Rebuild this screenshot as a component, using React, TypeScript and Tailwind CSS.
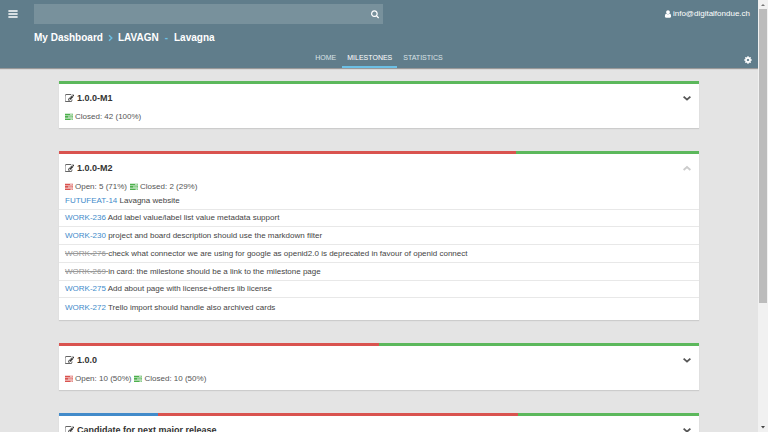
import React from "react";

type Tone = "blue" | "red" | "green";
type Card = { id: string; title: string; done?: boolean };
type Milestone = {
  name: string;
  segments: { tone: Tone; share: number }[];
  stats: { tone: Tone; text: string }[];
  expanded?: boolean;
  cards?: Card[];
};

const barTone: Record<Tone, string> = {
  blue: "bg-[#428bca]",
  red: "bg-[#d9534f]",
  green: "bg-[#5cb85c]",
};

const iconTone: Record<Tone, string> = {
  blue: "text-[#428bca]",
  red: "text-[#d9534f]",
  green: "text-[#4cb04c]",
};

const milestones: Milestone[] = [
  {
    name: "1.0.0-M1",
    segments: [{ tone: "green", share: 100 }],
    stats: [{ tone: "green", text: "Closed: 42 (100%)" }],
  },
  {
    name: "1.0.0-M2",
    segments: [
      { tone: "red", share: 71.4 },
      { tone: "green", share: 28.6 },
    ],
    stats: [
      { tone: "red", text: "Open: 5 (71%)" },
      { tone: "green", text: "Closed: 2 (29%)" },
    ],
    expanded: true,
    cards: [
      { id: "FUTUFEAT-14", title: "Lavagna website" },
      { id: "WORK-236", title: "Add label value/label list value metadata support" },
      { id: "WORK-230", title: "project and board description should use the markdown filter" },
      {
        id: "WORK-276",
        title: "check what connector we are using for google as openid2.0 is deprecated in favour of openid connect",
        done: true,
      },
      { id: "WORK-269", title: "in card: the milestone should be a link to the milestone page", done: true },
      { id: "WORK-275", title: "Add about page with license+others lib license" },
      { id: "WORK-272", title: "Trello import should handle also archived cards" },
    ],
  },
  {
    name: "1.0.0",
    segments: [
      { tone: "red", share: 50 },
      { tone: "green", share: 50 },
    ],
    stats: [
      { tone: "red", text: "Open: 10 (50%)" },
      { tone: "green", text: "Closed: 10 (50%)" },
    ],
  },
  {
    name: "Candidate for next major release",
    segments: [
      { tone: "blue", share: 15.4 },
      { tone: "red", share: 56.3 },
      { tone: "green", share: 28.3 },
    ],
    stats: [],
  },
];

function Icon({ d, className }: { d: string; className: string }) {
  return (
    <svg viewBox="64 64 1664 1664" fill="currentColor" aria-hidden="true" className={`shrink-0 ${className}`}>
      <path d={d} />
    </svg>
  );
}

const EDIT =
  "M888 1184l116-116-152-152-116 116v56h96v96h56zm440-720q-16-16-33 1l-350 350q-17 17-1 33t33-1l350-350q17-17 1-33zm80 594v190q0 119-84.5 203.5t-203.5 84.5h-832q-119 0-203.5-84.5t-84.5-203.5v-832q0-119 84.5-203.5t203.5-84.5h832q63 0 117 25 15 7 18 23 3 17-9 29l-49 49q-14 14-32 8-23-6-45-6h-832q-66 0-113 47t-47 113v832q0 66 47 113t113 47h832q66 0 113-47t47-113v-126q0-13 9-22l64-64q15-15 35-7t20 29zm-96-738l288 288-672 672h-288v-288zm444 132l-92 92-288-288 92-92q28-28 68-28t68 28l152 152q28 28 28 68t-28 68z";
const USER =
  "M1536 1399q0 109-62.5 187t-150.5 78h-854q-88 0-150.5-78t-62.5-187q0-85 8.5-160.5t31.5-152 58.5-131 94-89 134.5-34.5q131 128 313 128t313-128q76 0 134.5 34.5t94 89 58.5 131 31.5 152 8.5 160.5zm-256-887q0 159-112.5 271.5t-271.5 112.5-271.5-112.5-112.5-271.5 112.5-271.5 271.5-112.5 271.5 112.5 112.5 271.5z";
const COG =
  "M1152 896q0-106-75-181t-181-75-181 75-75 181 75 181 181 75 181-75 75-181zm512-109v222q0 12-8 23t-20 13l-185 28q-19 54-39 91 35 50 107 138 10 12 10 25t-9 23q-27 37-99 108t-94 71q-12 0-26-9l-138-108q-44 23-91 38-16 136-29 186-7 28-36 28h-222q-14 0-24.5-8.5t-11.5-21.5l-28-184q-49-16-90-37l-141 107q-10 9-25 9-14 0-25-11-126-114-165-168-7-10-7-23 0-12 8-23 15-21 51-66.5t54-70.5q-27-50-41-99l-183-27q-13-2-21-12.5t-8-23.5v-222q0-12 8-23t19-13l186-28q14-46 39-92-40-57-107-138-10-12-10-24 0-10 9-23 26-36 98.5-107.5t94.5-71.5q13 0 26 10l138 107q44-23 91-38 16-136 29-186 7-28 36-28h222q14 0 24.5 8.5t11.5 21.5l28 184q49 16 90 37l142-107q9-9 24-9 13 0 25 10 129 119 165 170 7 8 7 22 0 12-8 23-15 21-51 66.5t-54 70.5q26 50 41 98l183 28q13 2 21 12.5t8 23.5z";
const SEARCH =
  "M1216 832q0-185-131.5-316.5t-316.5-131.5-316.5 131.5-131.5 316.5 131.5 316.5 316.5 131.5 316.5-131.5 131.5-316.5zm512 832q0 52-38 90t-90 38q-54 0-90-38l-343-342q-179 124-399 124-143 0-273.5-55.5t-225-150-150-225-55.5-273.5 55.5-273.5 150-225 225-150 273.5-55.5 273.5 55.5 225 150 150 225 55.5 273.5q0 220-124 399l343 343q37 37 37 90z";
const BARS = "M128 256h1536v256h-1536zM128 768h1536v256h-1536zM128 1280h1536v256h-1536z";

function TasksIcon({ tone }: { tone: Tone }) {
  return (
    <svg viewBox="0 0 8 8" fill="currentColor" aria-hidden="true" className={`size-2 shrink-0 ${iconTone[tone]}`}>
      <path d="M0 0.8h8v1.7h-8zM0 3.1h8v1.7h-8zM0 5.4h8v1.7h-8z" />
      <path d="M5 1.2h2.6v0.9h-2.6zM3 3.5h4.6v0.9h-4.6zM5.5 5.8h2.1v0.9h-2.1z" fill="#fff" fillOpacity="0.8" />
    </svg>
  );
}

function Chevron({ up }: { up?: boolean }) {
  return (
    <svg viewBox="0 0 8 8" fill="none" stroke="currentColor" strokeWidth="1.9" aria-hidden="true" className="size-2">
      <path d={up ? "M0.6 6L4 3L7.4 6" : "M0.6 2.6L4 5.6L7.4 2.6"} />
    </svg>
  );
}

function MilestonePanel({ milestone }: { milestone: Milestone }) {
  const { name, segments, stats, expanded, cards } = milestone;
  return (
    <section className="bg-white shadow-[0_1px_1px_#cccccc]">
      <div className="flex h-[3px]">
        {segments.map((s) => (
          <div key={s.tone} className={barTone[s.tone]} style={{ width: `${s.share}%` }} />
        ))}
      </div>
      <div className="flex items-center gap-[3px] px-1.5 pt-2">
        <button type="button" aria-label={`Edit ${name}`} className="text-[#333333]">
          <Icon d={EDIT} className="size-[9px]" />
        </button>
        <h2 className="text-[9px] leading-3 font-bold text-[#333333]">{name}</h2>
        <button
          type="button"
          aria-label={expanded ? "Collapse" : "Expand"}
          className={`ml-auto mr-0.5 ${expanded ? "text-[#cccccc]" : "text-[#555555]"}`}
        >
          <Chevron up={expanded} />
        </button>
      </div>
      <div className={`mt-2 flex gap-[3px] px-1.5 leading-[10px] text-[#555555] ${cards ? "" : "pb-1.5"}`}>
        {stats.map((s) => (
          <span key={s.tone} className="flex items-center gap-0.5">
            <TasksIcon tone={s.tone} />
            {s.text}
          </span>
        ))}
      </div>
      {cards && (
        <ul className="mb-1 grid min-h-[124px] auto-rows-fr divide-y divide-[#e8e8e8]">
          {cards.map((c) => (
            <li key={c.id} className="flex items-end px-1.5 pb-0.5">
              <p>
                <a href="#" className={c.done ? "text-[#999999] line-through" : "text-[#428bca]"}>
                  {c.id}{" "}
                </a>
                {c.title}
              </p>
            </li>
          ))}
        </ul>
      )}
    </section>
  );
}

function Tab({ label, active }: { label: string; active?: boolean }) {
  return (
    <a
      href="#"
      aria-current={active ? "page" : undefined}
      className={`border-b-2 px-[5px] pb-[3px] ${
        active ? "border-[#6cc0e5] text-white" : "border-transparent text-[#dbe3e7]"
      }`}
    >
      {label}
    </a>
  );
}

export default function App() {
  return (
    <div className="flex h-screen overflow-hidden bg-[#e4e4e4] font-['Liberation_Sans',Arial,sans-serif] text-[8px] leading-3 text-[#444444]">
      <div className="flex min-w-0 flex-1 flex-col">
        <header className="flex shrink-0 flex-col bg-[#607d8b] text-white shadow-[0_1px_1px_#999999]">
          <div className="flex items-center pt-1 pr-2 pl-2">
            <button type="button" aria-label="Menu" className="mr-4">
              <Icon d={BARS} className="size-2.5" />
            </button>
            <form className="flex h-5 w-[47%] items-center bg-[#78919c] pr-1" role="search">
              <input
                type="text"
                aria-label="Search"
                className="h-full min-w-0 flex-1 bg-transparent px-2 outline-none"
              />
              <button type="submit" aria-label="Search">
                <Icon d={SEARCH} className="size-2 overflow-visible" />
              </button>
            </form>
            <a href="#" className="ml-auto flex items-center gap-px">
              <Icon d={USER} className="size-2" />
              info@digitalfondue.ch
            </a>
          </div>
          <nav aria-label="Breadcrumb" className="mt-2 flex items-center pl-[34px] text-[10px] leading-3 font-bold">
            <a href="#">My Dashboard</a>
            <svg
              viewBox="0 0 5 8"
              fill="none"
              stroke="#6cc0e5"
              strokeWidth="1.4"
              aria-hidden="true"
              className="mx-[5px] h-2 w-[5px]"
            >
              <path d="M1 1.2L3.8 4L1 6.8" />
            </svg>
            <a href="#">LAVAGN</a>
            <span className="mx-1.5 text-[#6cc0e5]">-</span>
            <a href="#">Lavagna</a>
          </nav>
          <div className="mt-2 grid grid-cols-[1fr_auto_1fr] items-center">
            <nav aria-label="Project" className="col-start-2 flex gap-px text-[7px] leading-[11px]">
              <Tab label="HOME" />
              <Tab label="MILESTONES" active />
              <Tab label="STATISTICS" />
            </nav>
            <button type="button" aria-label="Settings" className="mr-1.5 justify-self-end">
              <Icon d={COG} className="size-2" />
            </button>
          </div>
        </header>
        <main className="mx-auto mt-[13px] flex w-full max-w-[640px] flex-col gap-[23px]">
          {milestones.map((m) => (
            <MilestonePanel key={m.name} milestone={m} />
          ))}
        </main>
      </div>
      <div aria-hidden="true" className="flex w-2.5 shrink-0 flex-col items-center bg-[#f1f1f1]">
        <svg viewBox="0 0 10 9" className="h-[9px] w-2.5 shrink-0" fill="#777777">
          <path d="M3 6h4L5 4z" />
        </svg>
        <div className="h-[68%] w-2 bg-[#bcbcbc]" />
        <svg viewBox="0 0 10 9" className="mt-auto h-[9px] w-2.5 shrink-0" fill="#444444">
          <path d="M3 3h4L5 5.5z" />
        </svg>
      </div>
    </div>
  );
}
